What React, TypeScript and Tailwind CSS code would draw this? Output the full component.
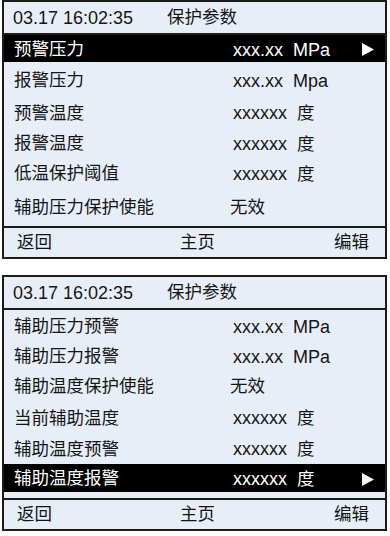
type Row = {
  label: string;
  value?: string;
  unit?: string;
  h: number;
  active?: boolean;
};

type Panel = {
  rows: Row[];
  tail: number;
};

const panels: Panel[] = [
  {
    rows: [
      { label: '预警压力', value: 'xxx.xx', unit: 'MPa', h: 27, active: true },
      { label: '报警压力', value: 'xxx.xx', unit: 'Mpa', h: 35 },
      { label: '预警温度', value: 'xxxxxx', unit: '度', h: 31 },
      { label: '报警温度', value: 'xxxxxx', unit: '度', h: 30 },
      { label: '低温保护阈值', value: 'xxxxxx', unit: '度', h: 30 },
      { label: '辅助压力保护使能', value: '无效', h: 38 },
    ],
    tail: 0,
  },
  {
    rows: [
      { label: '辅助压力预警', value: 'xxx.xx', unit: 'MPa', h: 31 },
      { label: '辅助压力报警', value: 'xxx.xx', unit: 'MPa', h: 29 },
      { label: '辅助温度保护使能', value: '无效', h: 32 },
      { label: '当前辅助温度', value: 'xxxxxx', unit: '度', h: 31 },
      { label: '辅助温度预警', value: 'xxxxxx', unit: '度', h: 31 },
      { label: '辅助温度报警', value: 'xxxxxx', unit: '度', h: 28, active: true },
    ],
    tail: 6,
  },
];

const font = { fontFamily: '"Liberation Sans", "Noto Sans CJK SC", sans-serif' };

function Arrow() {
  return (
    <svg width="12" height="13" viewBox="0 0 12 13" className="mr-[11px]">
      <polygon points="0,0 12,6.5 0,13" fill="#fff" />
    </svg>
  );
}

function ParamRow({ row }: { row: Row }) {
  const isCjk = row.value === '无效';
  return (
    <div
      className={`flex items-center pl-[10px] pt-[2px] ${row.active ? 'bg-black text-white' : 'text-[#151515]'}`}
      style={{ height: row.h }}
    >
      <span className="w-[219px] shrink-0 text-[17.5px] leading-none">{row.label}</span>
      {isCjk ? (
        <span className="text-[17.5px] leading-none -ml-[3px]">{row.value}</span>
      ) : (
        <span className="flex items-baseline text-[18px] leading-none">
          <span className="w-[60px]">{row.value}</span>
          <span className={row.unit === '度' ? 'ml-[4px] text-[17.5px]' : ''}>{row.unit}</span>
        </span>
      )}
      {row.active && <span className="ml-auto flex"><Arrow /></span>}
    </div>
  );
}

function Screen({ panel }: { panel: Panel }) {
  return (
    <div className="w-[385px] border-2 border-[#1c1c1c] bg-[#e7eef8]">
      <div className="flex h-[33px] items-center border-b-2 border-[#1c1c1c] pl-[9px] pt-[1px] text-[18px] leading-none text-[#151515]">
        <span className="w-[154px]">03.17 16:02:35</span>
        <span className="text-[17.5px]">保护参数</span>
      </div>
      <div className="flex flex-col">
        {panel.rows.map((row) => (
          <ParamRow key={row.label} row={row} />
        ))}
        {panel.tail > 0 && <div style={{ height: panel.tail }} />}
      </div>
      <div className="flex h-[31px] items-center border-t-2 border-[#1c1c1c] px-[13px] pt-[1px] text-[17.5px] leading-none text-[#151515]">
        <span className="w-[163px]">返回</span>
        <span>主页</span>
        <span className="ml-auto mr-[3px]">编辑</span>
      </div>
    </div>
  );
}

export default function App() {
  return (
    <div className="flex h-[536px] w-[390px] flex-col gap-[16px] bg-white pl-[2px]" style={font}>
      {panels.map((p, i) => (
        <Screen key={i} panel={p} />
      ))}
    </div>
  );
}
